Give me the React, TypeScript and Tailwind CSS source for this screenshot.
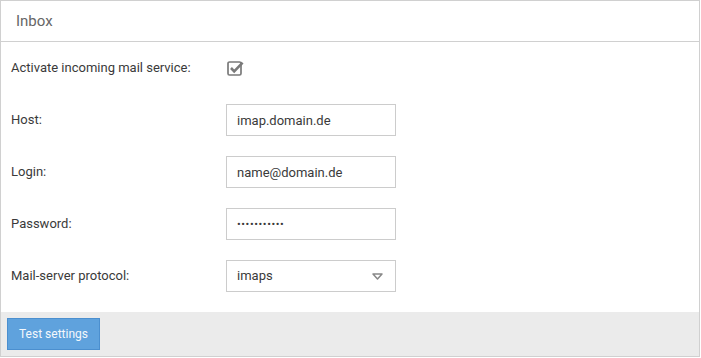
import { useState } from 'react'

const rows = [
  { label: 'Host:', value: 'imap.domain.de', type: 'text' },
  { label: 'Login:', value: 'name@domain.de', type: 'text' },
  { label: 'Password:', value: 'secretpass1', type: 'password' },
]

function CheckIcon() {
  return (
    <svg width="17" height="16" viewBox="0 0 17 16" fill="none">
      <rect x="1" y="2" width="13" height="13" rx="1.5" stroke="#7a7a7a" strokeWidth="1.7" />
      <path d="M4 8 L7.2 11.3 L15.6 2.6" stroke="#7a7a7a" strokeWidth="2.6" strokeLinejoin="miter" />
    </svg>
  )
}

export default function App() {
  const [active, setActive] = useState(true)
  const [protocol, setProtocol] = useState('imaps')

  return (
    <div className="w-[700px] h-[357px] border border-[#d0d0d0] bg-white flex flex-col font-['Roboto',sans-serif] text-[13px] text-[#3a3a3a]">
      <div className="h-[41px] shrink-0 border-b border-[#d0d0d0] flex items-center px-[15px] text-[15px] text-[#666]">
        Inbox
      </div>
      <div className="flex-1 flex flex-col gap-[20px] pt-[10px] px-[10px]">
        <div className="h-[32px] flex items-center">
          <span className="w-[215px] shrink-0">Activate incoming mail service:</span>
          <button className="ml-[1px]" onClick={() => setActive(!active)}>
            {active ? <CheckIcon /> : <span className="block w-[14px] h-[14px] border border-[#7a7a7a]" />}
          </button>
        </div>
        {rows.map((r) => (
          <div key={r.label} className="h-[32px] flex items-center">
            <span className="w-[215px] shrink-0">{r.label}</span>
            <input
              type={r.type}
              defaultValue={r.value}
              className={
                r.type === 'password'
                  ? 'w-[170px] h-[32px] border border-[#ccc] pl-[10px] outline-none text-[11px] tracking-[0.6px] text-[#3a3a3a]'
                  : 'w-[170px] h-[32px] border border-[#ccc] pl-[10px] outline-none text-[13px] text-[#3a3a3a]'
              }
            />
          </div>
        ))}
        <div className="h-[32px] flex items-center">
          <span className="w-[215px] shrink-0">Mail-server protocol:</span>
          <div className="relative w-[170px] h-[32px] border border-[#ccc] flex items-center pl-[10px]">
            <select
              value={protocol}
              onChange={(e) => setProtocol(e.target.value)}
              className="appearance-none w-full h-full bg-transparent outline-none text-[13px] text-[#3a3a3a]"
            >
              <option value="imaps">imaps</option>
              <option value="imap">imap</option>
              <option value="pop3">pop3</option>
            </select>
            <svg className="absolute right-[12px] top-[12px] pointer-events-none" width="11" height="7" viewBox="0 0 11 7">
              <path d="M1 1 H10 L5.5 6 Z" fill="none" stroke="#888" strokeWidth="1.5" strokeLinejoin="round" />
            </svg>
          </div>
        </div>
      </div>
      <div className="h-[44px] shrink-0 bg-[#ebebeb] flex items-center px-[6px]">
        <button className="w-[93px] h-[32px] bg-[#5fa2dd] border border-[#4b8fcf] text-[#f4f8fc] text-[12px]">
          Test settings
        </button>
      </div>
    </div>
  )
}
